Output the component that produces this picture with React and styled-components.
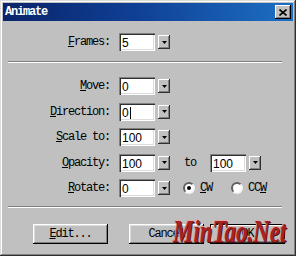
import React from 'react';
import styled, { createGlobalStyle } from 'styled-components';

const GlobalStyle = createGlobalStyle`
  body {
    margin: 0;
    background: #c0c0c0;
  }
`;

function DropButton() {
  return (
    <DropBtn>
      <svg width='5' height='3' viewBox='0 0 5 3'>
        <path d='M0 0h5L2.5 3z' fill='#000' />
      </svg>
    </DropBtn>
  );
}

function Field({ hot, rest, value, caret, children }) {
  return (
    <Row>
      <Label>
        <u>{hot}</u>
        {rest}
      </Label>
      <TextBox>
        {value}
        {caret && <Caret />}
      </TextBox>
      <DropButton />
      {children}
    </Row>
  );
}

function App() {
  return (
    <>
      <GlobalStyle />
      <Window>
        <TitleBar>
          <Title>Animate</Title>
          <CloseBtn>
            <svg width='8' height='7' viewBox='0 0 8 7'>
              <path d='M0.5 0.5l7 6M7.5 0.5l-7 6' stroke='#000' strokeWidth='1.6' />
            </svg>
          </CloseBtn>
        </TitleBar>

        <Content>
          <FramesRow>
            <Field hot='F' rest='rames:' value='5' />
          </FramesRow>
          <Separator $top={10} />

          <Fields>
            <Field hot='M' rest='ove:' value='0' />
            <Field hot='D' rest='irection:' value='0' caret />
            <Field hot='S' rest='cale to:' value='100' />
            <Field hot='O' rest='pacity:' value='100'>
              <ToLabel>to</ToLabel>
              <TextBox>100</TextBox>
              <DropButton />
            </Field>
            <Field hot='R' rest='otate:' value='0'>
              <RadioOption $first>
                <Radio $checked />
                <span>
                  <u>C</u>W
                </span>
              </RadioOption>
              <RadioOption>
                <Radio />
                <span>
                  CC<u>W</u>
                </span>
              </RadioOption>
            </Field>
          </Fields>

          <Separator $top={9} />

          <ButtonBar>
            <PushButton>
              <u>E</u>dit...
            </PushButton>
            <PushButton $left={21}>Cancel</PushButton>
            <PushButton $left={6} $default>
              OK
            </PushButton>
          </ButtonBar>
        </Content>

        <Watermark>MinTao.Net</Watermark>
      </Window>
    </>
  );
}

export default App;

const Window = styled.div`
  position: relative;
  width: 296px;
  height: 256px;
  box-sizing: border-box;
  display: flex;
  flex-direction: column;
  background: #c0c0c0;
  box-shadow: inset -1px -1px #303030, inset 1px 1px #dcdcdc,
    inset -2px -2px #808080, inset 2px 2px #ffffff;
  overflow: hidden;
  font-family: 'Liberation Mono', 'DejaVu Sans Mono', monospace;
  font-size: 12px;
  letter-spacing: -1.2px;
  color: #000;
`;

const TitleBar = styled.div`
  margin: 3px 3px 0;
  height: 18px;
  display: flex;
  align-items: center;
  justify-content: space-between;
  background: linear-gradient(90deg, #0a246a 0%, #0f3f94 45%, #1d6fc4 100%);
`;

const Title = styled.span`
  padding-left: 2px;
  color: #fff;
  font-weight: bold;
`;

const CloseBtn = styled.div`
  width: 16px;
  height: 14px;
  margin-right: 2px;
  display: flex;
  align-items: center;
  justify-content: center;
  background: #c0c0c0;
  box-shadow: inset -1px -1px #000, inset 1px 1px #fff, inset -2px -2px #808080;
`;

const Content = styled.div`
  display: flex;
  flex-direction: column;
`;

const FramesRow = styled.div`
  margin-top: 12px;
`;

const Fields = styled.div`
  margin-top: 14px;
  display: flex;
  flex-direction: column;
  gap: 7.5px;
`;

const Row = styled.div`
  display: flex;
  align-items: center;
  height: 18px;
`;

const Label = styled.span`
  width: 110px;
  margin-right: 9px;
  text-align: right;
  white-space: pre;
`;

const TextBox = styled.div`
  width: 36px;
  height: 18px;
  box-sizing: border-box;
  padding: 2px 0 0 3px;
  display: flex;
  align-items: center;
  background: #fff;
  font-family: 'Liberation Sans', Arial, sans-serif;
  font-size: 12px;
  letter-spacing: 0;
  box-shadow: inset 1px 1px #808080, inset 2px 2px #303030,
    inset -1px -1px #ffffff, inset -2px -2px #dcdcdc;
`;

const Caret = styled.span`
  width: 1px;
  height: 12px;
  margin-left: 1px;
  background: #000;
`;

const DropBtn = styled.div`
  width: 12px;
  height: 14px;
  margin-left: 3px;
  box-sizing: border-box;
  display: flex;
  align-items: center;
  justify-content: center;
  background: #c0c0c0;
  box-shadow: inset -1px -1px #303030, inset 1px 1px #ffffff,
    inset -2px -2px #808080;
`;

const ToLabel = styled.span`
  margin-left: 14px;
  width: 26px;
`;

const RadioOption = styled.div`
  display: flex;
  align-items: center;
  gap: 5px;
  margin-left: ${({ $first }) => ($first ? '13px' : '19px')};
`;

const Radio = styled.span`
  position: relative;
  width: 12px;
  height: 12px;
  box-sizing: border-box;
  border-radius: 50%;
  background: #fff;
  border: 2px solid;
  border-color: #606060 #f4f4f4 #f4f4f4 #606060;

  &::after {
    content: '';
    display: ${({ $checked }) => ($checked ? 'block' : 'none')};
    position: absolute;
    left: 2px;
    top: 2px;
    width: 4px;
    height: 4px;
    border-radius: 50%;
    background: #000;
  }
`;

const Separator = styled.div`
  margin: ${({ $top }) => $top}px 14px 0 8px;
  border-top: 1px solid #808080;
  border-bottom: 1px solid #ffffff;
  height: 0;
`;

const ButtonBar = styled.div`
  margin-top: 16px;
  padding-left: 33px;
  display: flex;
`;

const PushButton = styled.div`
  width: 75px;
  height: 20px;
  margin-left: ${({ $left }) => $left || 0}px;
  box-sizing: border-box;
  display: flex;
  align-items: center;
  justify-content: center;
  background: #c0c0c0;
  box-shadow: ${({ $default }) =>
    $default
      ? 'inset 0 0 0 1px #000, inset -2px -2px #303030, inset 2px 2px #ffffff, inset -3px -3px #808080'
      : 'inset -1px -1px #000, inset 1px 1px #ffffff, inset -2px -2px #808080, inset 2px 2px #dcdcdc'};
`;

const Watermark = styled.div`
  position: absolute;
  left: 173px;
  top: 214px;
  font-family: 'Liberation Serif', 'Times New Roman', serif;
  font-style: italic;
  font-weight: bold;
  font-size: 31px;
  letter-spacing: 0;
  transform: scaleX(0.74);
  transform-origin: left center;
  color: #a82222;
  text-shadow: 1px 1px 0 #4a0a0a, -1px -1px 0 #e0a8a8;
  white-space: nowrap;
`;
